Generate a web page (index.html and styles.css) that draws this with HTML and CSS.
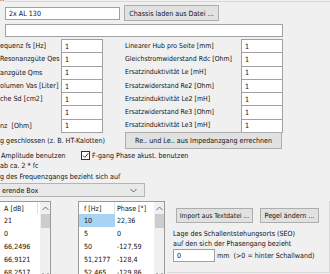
FILE: index.html
```html
<!DOCTYPE html>
<html lang="de">
<head>
    <meta charset="UTF-8">
    <title>Chassis</title>
    <link rel="stylesheet" href="styles.css">
</head>
<body>
<div class="form">

    <!-- frame caption -->
    <div class="caption-line">
        <span class="caption">n</span>
        <span class="rule"></span>
    </div>

    <div class="head-row">
        <input class="field name" type="text" value="2x AL 130">
        <button class="btn chassis">Chassis laden aus Datei ...</button>
    </div>
    <input class="field wide" type="text" value="">

    <!-- Thiele/Small parameters -->
    <div class="params">
        <div class="lbl">equenz fs [Hz]</div><input class="field num" value="1">
        <div class="lbl rlbl">Linearer Hub pro Seite [mm]</div><input class="field num" value="1">

        <div class="lbl">Resonanzgüte Qes</div><input class="field num" value="1">
        <div class="lbl rlbl">Gleichstromwiderstand Rdc [Ohm]</div><input class="field num" value="1">

        <div class="lbl">anzgüte Qms</div><input class="field num" value="1">
        <div class="lbl rlbl">Ersatzinduktivität Le [mH]</div><input class="field num" value="1">

        <div class="lbl">olumen Vas [Liter]</div><input class="field num" value="1">
        <div class="lbl rlbl">Ersatzwiderstand Re2 [Ohm]</div><input class="field num" value="1">

        <div class="lbl">che Sd [cm2]</div><input class="field num" value="1">
        <div class="lbl rlbl">Ersatzinduktivität Le2 [mH]</div><input class="field num" value="1">

        <div class="lbl"></div><input class="field num" value="1">
        <div class="lbl rlbl">Ersatzwiderstand Re3 [Ohm]</div><input class="field num" value="1">

        <div class="lbl">nz&nbsp; [Ohm]</div><input class="field num" value="1">
        <div class="lbl rlbl">Ersatzinduktivität Le3 [mH]</div><input class="field num" value="1">
    </div>

    <div class="calc-row">
        <div class="lbl">g geschlossen (z. B. HT-Kalotten)</div>
        <button class="btn calc">Re.. und Le.. aus Impedanzgang errechnen</button>
    </div>

    <div class="check-row">
        <div class="check first">Amplitude benutzen</div>
        <div class="check">
            <span class="box"><svg width="7" height="7" viewBox="0 0 7 7"><path d="M1 3.6 L2.8 5.4 L6.2 1.4" fill="none" stroke="#222" stroke-width="0.9"/></svg></span>
            F-gang Phase akust. benutzen
        </div>
    </div>
    <div class="note">ab ca. 2 * fc</div>
    <div class="note">g des Frequenzgangs bezieht sich auf</div>

    <div class="combo">
        <span>erende Box</span>
        <svg width="7" height="5" viewBox="0 0 7 5"><path d="M0.5 1 L3.5 4 L6.5 1" fill="none" stroke="#555" stroke-width="0.9"/></svg>
    </div>

    <!-- response tables and import -->
    <div class="bottom">
        <div class="list list-a">
            <div class="list-body">
                <div class="lrow lhead"><span class="c1">A [dB]</span></div>
                <div class="lrow"><span class="c1">21</span></div>
                <div class="lrow"><span class="c1">0</span></div>
                <div class="lrow"><span class="c1">66,2496</span></div>
                <div class="lrow"><span class="c1">66,9121</span></div>
                <div class="lrow"><span class="c1">68,2517</span></div>
            </div>
            <div class="vscroll">
                <span class="arr"><svg width="7" height="5" viewBox="0 0 7 5"><path d="M0.5 4 L3.5 1 L6.5 4" fill="none" stroke="#606060" stroke-width="0.9"/></svg></span>
                <span class="thumb"></span>
                <span class="track"></span>
                <span class="arr"><svg width="7" height="5" viewBox="0 0 7 5"><path d="M0.5 1 L3.5 4 L6.5 1" fill="none" stroke="#606060" stroke-width="0.9"/></svg></span>
            </div>
        </div>

        <div class="list list-f">
            <div class="list-body">
                <div class="lrow lhead"><span class="c1">f [Hz]</span><span class="c2">Phase [°]</span></div>
                <div class="lrow"><span class="c1 sel">10</span><span class="c2">22,36</span></div>
                <div class="lrow"><span class="c1">5</span><span class="c2">0</span></div>
                <div class="lrow"><span class="c1">50</span><span class="c2">-127,59</span></div>
                <div class="lrow"><span class="c1">51,2177</span><span class="c2">-128,4</span></div>
                <div class="lrow"><span class="c1">52,465</span><span class="c2">-129,86</span></div>
            </div>
            <div class="vscroll">
                <span class="arr"><svg width="7" height="5" viewBox="0 0 7 5"><path d="M0.5 4 L3.5 1 L6.5 4" fill="none" stroke="#606060" stroke-width="0.9"/></svg></span>
                <span class="thumb"></span>
                <span class="track"></span>
                <span class="arr"><svg width="7" height="5" viewBox="0 0 7 5"><path d="M0.5 1 L3.5 4 L6.5 1" fill="none" stroke="#606060" stroke-width="0.9"/></svg></span>
            </div>
        </div>

        <div class="side">
            <div class="btn-row">
                <button class="btn import">Import aus Textdatei ...</button>
                <button class="btn pegel">Pegel ändern ...</button>
            </div>
            <div class="seo-text">Lage des Schallentstehungsorts (SEO)<br>auf den sich der Phasengang bezieht</div>
            <div class="seo-row">
                <input class="field num" value="0">
                <span>mm&nbsp; (&gt;0 = hinter Schallwand)</span>
            </div>
        </div>
    </div>
</div>
</body>
</html>
```

FILE: styles.css
```css
/* Page */
html, body {
    margin: 0;
    padding: 0;
    overflow: hidden;
    height: 274px;
}
body {
    background-color: #f0f0f0;
    font-family: "DejaVu Sans Condensed", "DejaVu Sans", sans-serif;
    font-size: 7.1px;
    color: #111;
}
.form {
    width: 330px;
}

/* Frame caption */
.caption-line {
    display: flex;
    height: 5px;
}
.caption {
    line-height: 8px;
    margin-top: -5px;
    width: 5px;
    overflow: hidden;
}
.rule {
    flex: 1;
    border-top: 1px solid #d8d8d8;
    margin-top: 1px;
}

/* Inputs and buttons */
.field {
    box-sizing: border-box;
    background: #fff;
    border: 1px solid #a0a0a0;
    font: inherit;
    color: #111;
    padding: 0 3px;
    margin: 0;
    outline: none;
    height: 13px;
}
.btn {
    box-sizing: border-box;
    background: #e1e1e1;
    border: 1px solid #adadad;
    font: inherit;
    color: #111;
    padding: 0;
    margin: 0;
    white-space: nowrap;
}

.head-row {
    display: flex;
    align-items: center;
    height: 16px;
    padding-left: 5px;
}
.name {
    width: 115px;
}
.chassis {
    width: 95px;
    height: 16px;
    margin-left: 4px;
}
.wide {
    display: block;
    width: 278px;
    margin: 3px 0 0 5px;
}

/* Parameter grid */
.params {
    display: grid;
    grid-template-columns: 61px 42px 22px 116px 42px;
    grid-auto-rows: 13.3px;
    margin-top: 2px;
}
.lbl {
    white-space: nowrap;
    display: flex;
    align-items: center;
    overflow: hidden;
}
.rlbl {
    grid-column: 4;
    font-size: 6.9px;
}
.params .num {
    width: 42px;
    height: 14.3px;
}

.calc-row {
    display: flex;
    align-items: center;
    height: 17px;
}
.calc-row .lbl {
    width: 125px;
}
.calc {
    width: 157px;
    height: 17px;
}

.check-row {
    display: flex;
    align-items: center;
    height: 11px;
    margin-top: 1px;
}
.check {
    display: flex;
    align-items: center;
}
.check.first {
    width: 81px;
    padding-left: 1px;
    box-sizing: border-box;
}
.box {
    width: 7px;
    height: 7px;
    border: 1px solid #333;
    background: #fff;
    margin-right: 2px;
    display: flex;
}
.note {
    line-height: 10.5px;
}

.combo {
    box-sizing: border-box;
    width: 146px;
    height: 14px;
    margin: 1px 0 0 -1px;
    padding: 0 7px 0 2px;
    background: #e9e9e9;
    border: 1px solid #b5b5b5;
    display: flex;
    align-items: center;
    justify-content: space-between;
}

/* Tables */
.bottom {
    display: flex;
    margin-top: 4px;
}
.list {
    display: flex;
    background: #fff;
    border: 1px solid #9a9a9a;
    height: 80px;
    box-sizing: border-box;
}
.list-a {
    width: 52px;
    margin-left: -1px;
}
.list-f {
    width: 87px;
    margin-left: 27px;
}
.list-body {
    flex: 1;
}
.lrow {
    display: flex;
    height: 13px;
    align-items: center;
}
.lhead {
    height: 12px;
}
.lrow span {
    display: flex;
    align-items: center;
    height: 100%;
    box-sizing: border-box;
    white-space: nowrap;
}
.list-a .c1 {
    width: 38px;
    padding-left: 4px;
}
.list-a .lhead .c1 {
    border-right: 1px solid #e2e2e2;
}
.list-f .c1 {
    width: 36px;
    padding-left: 5px;
}
.list-f .c2 {
    width: 38px;
    padding-left: 2px;
}
.list-f .lhead .c1 {
    border-right: 1px solid #e2e2e2;
}
.sel {
    background: #a9d3f5;
}
.vscroll {
    width: 10px;
    background: #f0f0f0;
    display: flex;
    flex-direction: column;
    align-items: center;
}
.arr {
    height: 12px;
    display: flex;
    align-items: center;
}
.thumb {
    width: 9px;
    height: 14px;
    background: #cdcdcd;
}
.track {
    flex: 1;
}

/* Import / SEO box */
.side {
    box-sizing: border-box;
    width: 163px;
    height: 72px;
    margin-left: 2px;
    border-right: 1px solid #d8d8d8;
    border-bottom: 1px solid #d8d8d8;
    padding: 7px 0 0 6px;
}
.btn-row {
    display: flex;
    gap: 7px;
    margin-left: 3px;
}
.import {
    width: 77px;
    height: 15px;
    font-size: 6.7px;
}
.pegel {
    width: 59px;
    height: 15px;
}
.seo-text {
    margin-top: 6px;
    line-height: 10px;
}
.seo-row {
    display: flex;
    align-items: center;
}
.seo-row .num {
    width: 42px;
    margin-right: 2px;
}
```
